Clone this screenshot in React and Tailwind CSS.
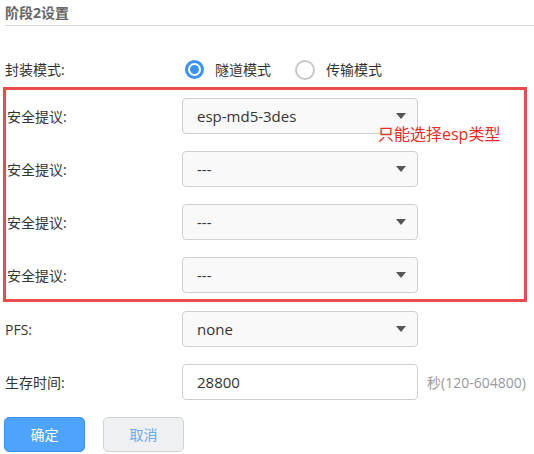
import React from "react";

const font = { fontFamily: '"Open Sans", "Noto Sans CJK SC", sans-serif' };

function Arrow() {
  return (
    <svg width="10" height="6" viewBox="0 0 10 6" className="shrink-0">
      <path d="M0 0 L10 0 L5 6 Z" fill="#555" />
    </svg>
  );
}

function Select({ value }) {
  return (
    <div className="w-[236px] h-[36px] border border-[#cfcfcf] rounded-[4px] bg-[#f9f9f9] flex items-center justify-between pl-[14px] pr-[11px] text-[15px] text-[#333]">
      <span>{value}</span>
      <Arrow />
    </div>
  );
}

function Label({ children, w }) {
  return <div className={`${w} shrink-0 text-[14px] text-[#333]`}>{children}</div>;
}

function Radio({ checked }) {
  return checked ? (
    <div className="w-[19px] h-[19px] rounded-full border-[3px] border-[#3b93f5] flex items-center justify-center bg-white">
      <div className="w-[9px] h-[9px] rounded-full bg-[#3b93f5]" />
    </div>
  ) : (
    <div className="w-[20px] h-[20px] rounded-full border-2 border-[#c8c8c8] bg-white" />
  );
}

export default function App() {
  return (
    <div className="w-[534px] h-[454px] bg-white overflow-hidden" style={font}>
      <div className="ml-[5px] h-[26px] border-b border-[#d9d9d9] pt-[3px] text-[14px] font-bold text-[#666] leading-[20px]">
        阶段2设置
      </div>

      <div className="mt-[26px] h-[35px] flex items-center pl-[5px]">
        <Label w="w-[177px]">封装模式:</Label>
        <div className="flex items-center ml-[3px]">
          <Radio checked />
          <span className="ml-[11px] text-[14px] text-[#333]">隧道模式</span>
          <div className="ml-[24px]">
            <Radio />
          </div>
          <span className="ml-[11px] text-[14px] text-[#333]">传输模式</span>
        </div>
      </div>

      <div className="relative ml-[3px] w-[524px] border-[3px] border-[#ea4b4b] pt-[8px] pb-[6px] pl-[1px] flex flex-col gap-[17px]">
        <div className="flex items-center">
          <Label w="w-[175px]">安全提议:</Label>
          <Select value="esp-md5-3des" />
        </div>
        <div className="flex items-center">
          <Label w="w-[175px]">安全提议:</Label>
          <Select value="---" />
        </div>
        <div className="flex items-center">
          <Label w="w-[175px]">安全提议:</Label>
          <Select value="---" />
        </div>
        <div className="flex items-center">
          <Label w="w-[175px]">安全提议:</Label>
          <Select value="---" />
        </div>
        <div className="absolute left-[372px] top-[36px] text-[16px] leading-[16px] text-[#f02a2a]">
          只能选择esp类型
        </div>
      </div>

      <div className="mt-[9px] flex items-center pl-[5px]">
        <Label w="w-[177px]">PFS:</Label>
        <Select value="none" />
      </div>

      <div className="mt-[17px] flex items-center pl-[5px]">
        <Label w="w-[177px]">生存时间:</Label>
        <div className="w-[236px] h-[36px] border border-[#cfcfcf] rounded-[4px] bg-white flex items-center pl-[14px] text-[15px] text-[#333]">
          28800
        </div>
        <span className="ml-[9px] text-[14px] text-[#999] whitespace-nowrap">秒(120-604800)</span>
      </div>

      <div className="mt-[17px] flex items-center pl-[4px] gap-[18px]">
        <button className="w-[81px] h-[35px] rounded-[5px] bg-[#4ea3fc] border border-[#3f90ea] text-white text-[14px]">
          确定
        </button>
        <button className="w-[81px] h-[35px] rounded-[5px] bg-[#eff0f2] border border-[#d0d2d5] text-[#6aa8ee] text-[14px]">
          取消
        </button>
      </div>
    </div>
  );
}
